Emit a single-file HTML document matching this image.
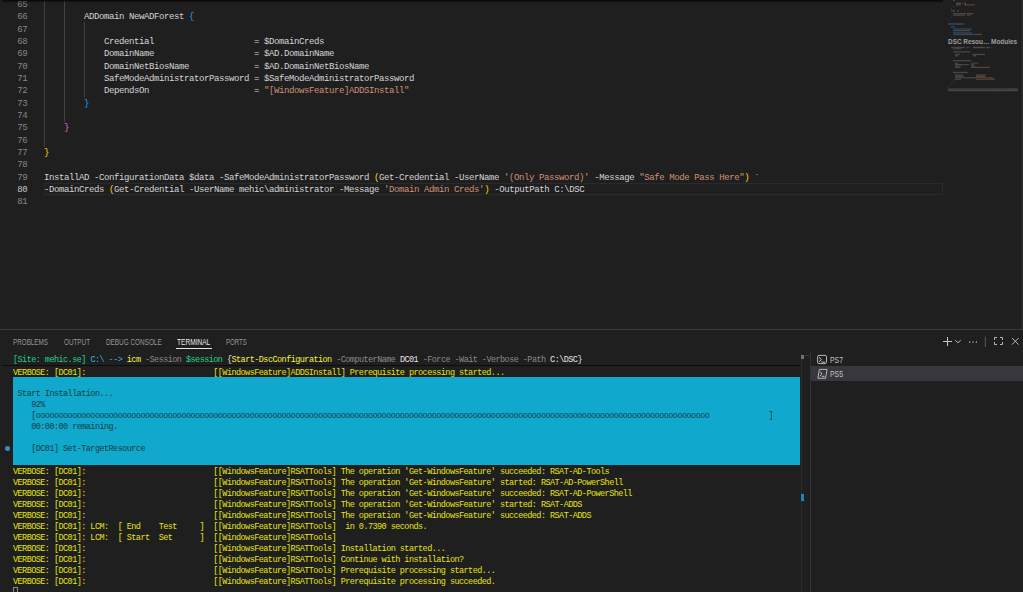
<!DOCTYPE html>
<html><head><meta charset="utf-8">
<style>
html,body{margin:0;padding:0;width:1023px;height:592px;overflow:hidden;background:#1f1f1f;}
body{position:relative;font-family:"Liberation Mono",monospace;}
.ln{position:absolute;left:0;width:27.2px;text-align:right;font-size:9.0px;letter-spacing:-0.400px;line-height:12.33px;white-space:pre;}
.cl{position:absolute;left:44px;font-size:9.0px;letter-spacing:-0.400px;line-height:12.33px;white-space:pre;color:#d4d4d4;}
.tl{position:absolute;left:13px;font-size:8.5px;letter-spacing:-0.550px;line-height:11.0px;white-space:pre;}
.tab{position:absolute;top:336px;font-family:"Liberation Sans",sans-serif;font-size:8.5px;line-height:12px;transform-origin:0 0;white-space:pre;}
</style></head><body>
<div id="editor" style="position:absolute;left:0;top:0;width:1023px;height:329px;overflow:hidden;background:#1f1f1f">
<div class="ln" style="top:-1.00px;color:#858585">65</div>
<div class="ln" style="top:11.33px;color:#858585">66</div>
<div class="cl" style="top:11.33px">        ADDomain NewADForest <span style="color:#179fff">{</span></div>
<div class="ln" style="top:23.66px;color:#858585">67</div>
<div class="ln" style="top:35.99px;color:#858585">68</div>
<div class="cl" style="top:35.99px">            Credential                    = $DomainCreds</div>
<div class="ln" style="top:48.32px;color:#858585">69</div>
<div class="cl" style="top:48.32px">            DomainName                    = $AD.DomainName</div>
<div class="ln" style="top:60.65px;color:#858585">70</div>
<div class="cl" style="top:60.65px">            DomainNetBiosName             = $AD.DomainNetBiosName</div>
<div class="ln" style="top:72.98px;color:#858585">71</div>
<div class="cl" style="top:72.98px">            SafeModeAdministratorPassword = $SafeModeAdministratorPassword</div>
<div class="ln" style="top:85.31px;color:#858585">72</div>
<div class="cl" style="top:85.31px">            DependsOn                     = <span style="color:#ce9178">&quot;[WindowsFeature]ADDSInstall&quot;</span></div>
<div class="ln" style="top:97.64px;color:#858585">73</div>
<div class="cl" style="top:97.64px">        <span style="color:#179fff">}</span></div>
<div class="ln" style="top:109.97px;color:#858585">74</div>
<div class="ln" style="top:122.30px;color:#858585">75</div>
<div class="cl" style="top:122.30px">    <span style="color:#da70d6">}</span></div>
<div class="ln" style="top:134.63px;color:#858585">76</div>
<div class="ln" style="top:146.96px;color:#858585">77</div>
<div class="cl" style="top:146.96px"><span style="color:#ffd700">}</span></div>
<div class="ln" style="top:159.29px;color:#858585">78</div>
<div class="ln" style="top:171.62px;color:#858585">79</div>
<div class="cl" style="top:171.62px">InstallAD -ConfigurationData $data -SafeModeAdministratorPassword <span style="color:#ffd700">(</span>Get-Credential -UserName <span style="color:#ce9178">&#x27;(Only Password)&#x27;</span> -Message <span style="color:#ce9178">&quot;Safe Mode Pass Here&quot;</span><span style="color:#ffd700">)</span> `</div>
<div class="ln" style="top:183.95px;color:#c6c6c6">80</div>
<div class="cl" style="top:183.95px">-DomainCreds <span style="color:#ffd700">(</span>Get-Credential -UserName mehic\administrator -Message <span style="color:#ce9178">&#x27;Domain Admin Creds&#x27;</span><span style="color:#ffd700">)</span> -OutputPath C:\DSC</div>
<div class="ln" style="top:196.28px;color:#858585">81</div>
<div style="position:absolute;left:44px;top:183.15px;width:897px;height:10.33px;border:1px solid #2a2a2a"></div>
<div style="position:absolute;left:44px;top:0.00px;width:1px;height:146.96px;background:#404040"></div>
<div style="position:absolute;left:64px;top:0.00px;width:1px;height:122.30px;background:#404040"></div>
<div style="position:absolute;left:84px;top:21.66px;width:1px;height:75.98px;background:#404040"></div>
<svg style="position:absolute;left:0;top:0" width="1023" height="100"><rect x="953" y="0.0" width="2" height="1.2" fill="#2c4863"/><rect x="956" y="2.5" width="5" height="2.0" fill="#464646"/><rect x="962" y="2.5" width="1" height="2.0" fill="#383838"/><rect x="964" y="2.5" width="2" height="2.0" fill="#574539"/><rect x="956" y="4.3" width="5" height="1.2" fill="#464646"/><rect x="964" y="4.3" width="11" height="1.2" fill="#574539"/><rect x="953" y="6.3" width="1" height="1.2" fill="#383838"/><rect x="951" y="7.8" width="1" height="1.2" fill="#383838"/><rect x="951" y="10.2" width="4" height="1.5" fill="#464646"/><rect x="957" y="10.2" width="2" height="1.5" fill="#2c4863"/><rect x="953" y="13.0" width="13" height="1.4" fill="#464646"/><rect x="967" y="13.0" width="6" height="1.4" fill="#574539"/><rect x="953" y="14.6" width="12" height="1.2" fill="#464646"/><rect x="967" y="14.6" width="3" height="1.2" fill="#574539"/><rect x="951" y="17.2" width="1" height="1.2" fill="#383838"/><rect x="948" y="19.6" width="1" height="1.2" fill="#383838"/><rect x="948" y="23.2" width="9" height="1.6" fill="#2c4863"/><rect x="957" y="23.2" width="6" height="1.6" fill="#464646"/><rect x="964" y="23.2" width="1" height="1.6" fill="#383838"/><rect x="951" y="26.0" width="4" height="1.4" fill="#2c4863"/><rect x="953" y="28.4" width="19" height="1.3" fill="#2c4863"/><rect x="953" y="30.0" width="4" height="1.3" fill="#2c4863"/><rect x="957" y="30.0" width="13" height="1.3" fill="#464646"/><rect x="953" y="32.2" width="19" height="1.3" fill="#2c4863"/><rect x="953" y="33.8" width="4" height="1.3" fill="#2c4863"/><rect x="957" y="33.8" width="25" height="1.3" fill="#464646"/><rect x="951" y="36.6" width="1" height="1.2" fill="#383838"/><rect x="951" y="46.8" width="14" height="1.4" fill="#464646"/><rect x="966" y="46.8" width="3" height="1.4" fill="#383838"/><rect x="973" y="46.8" width="12" height="1.4" fill="#574539"/><rect x="986" y="46.8" width="4" height="1.4" fill="#464646"/><rect x="991" y="46.8" width="1" height="1.4" fill="#383838"/><rect x="953" y="48.2" width="8" height="1.2" fill="#464646"/><rect x="953" y="51.2" width="17" height="1.3" fill="#464646"/><rect x="955" y="53.8" width="5" height="1.3" fill="#464646"/><rect x="972" y="53.8" width="1" height="1.3" fill="#383838"/><rect x="973" y="53.8" width="12" height="1.3" fill="#574539"/><rect x="955" y="55.2" width="3" height="1.2" fill="#464646"/><rect x="973" y="55.2" width="3" height="1.2" fill="#574539"/><rect x="953" y="57.4" width="1" height="1.2" fill="#383838"/><rect x="953" y="60.0" width="18" height="1.3" fill="#464646"/><rect x="955" y="62.6" width="3" height="1.2" fill="#464646"/><rect x="971" y="62.6" width="7" height="1.2" fill="#2c4863"/><rect x="955" y="64.0" width="14" height="1.2" fill="#464646"/><rect x="971" y="64.0" width="3" height="1.2" fill="#2c4863"/><rect x="955" y="65.4" width="6" height="1.2" fill="#464646"/><rect x="971" y="65.4" width="4" height="1.2" fill="#574539"/><rect x="955" y="66.8" width="5" height="1.2" fill="#464646"/><rect x="971" y="66.8" width="19" height="1.2" fill="#574539"/><rect x="953" y="69.4" width="1" height="1.2" fill="#383838"/><rect x="953" y="71.8" width="15" height="1.3" fill="#464646"/><rect x="955" y="74.4" width="8" height="1.2" fill="#464646"/><rect x="976" y="74.4" width="10" height="1.2" fill="#574539"/><rect x="955" y="75.8" width="9" height="1.2" fill="#464646"/><rect x="976" y="75.8" width="9" height="1.2" fill="#574539"/><rect x="955" y="77.2" width="21" height="1.2" fill="#464646"/><rect x="976" y="77.2" width="17" height="1.2" fill="#574539"/><rect x="955" y="78.6" width="6" height="1.2" fill="#464646"/><rect x="976" y="78.6" width="19" height="1.2" fill="#574539"/><rect x="953" y="80.8" width="1" height="1.2" fill="#383838"/><rect x="951" y="83.4" width="1" height="1.2" fill="#383838"/><rect x="948" y="86.0" width="1" height="1.2" fill="#383838"/><rect x="948" y="88.4" width="60" height="1.3" fill="#464646"/><rect x="1008" y="88.4" width="10" height="1.3" fill="#574539"/><rect x="948" y="90.0" width="45" height="1.2" fill="#464646"/><rect x="993" y="90.0" width="10" height="1.2" fill="#574539"/><rect x="1003" y="90.0" width="15" height="1.2" fill="#464646"/></svg>
<div style="position:absolute;left:948.2px;top:37.4px;font-family:'Liberation Sans',sans-serif;font-weight:bold;font-size:7px;line-height:10px;color:#a0a0a0;white-space:pre;transform-origin:0 0;transform:scaleX(0.915)">DSC Resou… Modules</div>
<div style="position:absolute;left:2px;top:0;width:941px;height:3px;background:linear-gradient(rgba(0,0,0,0.85),rgba(0,0,0,0.35) 50%,rgba(0,0,0,0))"></div>
</div>
<div style="position:absolute;left:0;top:329px;width:1023px;height:1px;background:#3c3c3c"></div>
<div class="tab" style="left:13.3px;color:#969696;transform:scaleX(0.7400)">PROBLEMS</div>
<div class="tab" style="left:63.5px;color:#969696;transform:scaleX(0.7444)">OUTPUT</div>
<div class="tab" style="left:105.9px;color:#969696;transform:scaleX(0.7507)">DEBUG CONSOLE</div>
<div class="tab" style="left:177.0px;color:#e7e7e7;transform:scaleX(0.7744)">TERMINAL</div>
<div class="tab" style="left:226.4px;color:#969696;transform:scaleX(0.7163)">PORTS</div>

<div style="position:absolute;left:175.5px;top:348px;width:36.7px;height:1px;background:#e7e7e7"></div>
<div id="term" style="position:absolute;left:0;top:0;width:1023px;height:592px;">
<div class="tl" style="top:367.57px"><span style="color:#e5e510">VERBOSE: [DC01]:                            [[WindowsFeature]ADDSInstall] Prerequisite processing started...</span></div>
<div class="tl" style="top:466.57px"><span style="color:#e5e510">VERBOSE: [DC01]:                            [[WindowsFeature]RSATTools] The operation &#x27;Get-WindowsFeature&#x27; succeeded: RSAT-AD-Tools</span></div>
<div class="tl" style="top:477.57px"><span style="color:#e5e510">VERBOSE: [DC01]:                            [[WindowsFeature]RSATTools] The operation &#x27;Get-WindowsFeature&#x27; started: RSAT-AD-PowerShell</span></div>
<div class="tl" style="top:488.57px"><span style="color:#e5e510">VERBOSE: [DC01]:                            [[WindowsFeature]RSATTools] The operation &#x27;Get-WindowsFeature&#x27; succeeded: RSAT-AD-PowerShell</span></div>
<div class="tl" style="top:499.57px"><span style="color:#e5e510">VERBOSE: [DC01]:                            [[WindowsFeature]RSATTools] The operation &#x27;Get-WindowsFeature&#x27; started: RSAT-ADDS</span></div>
<div class="tl" style="top:510.57px"><span style="color:#e5e510">VERBOSE: [DC01]:                            [[WindowsFeature]RSATTools] The operation &#x27;Get-WindowsFeature&#x27; succeeded: RSAT-ADDS</span></div>
<div class="tl" style="top:521.57px"><span style="color:#e5e510">VERBOSE: [DC01]: LCM:  [ End    Test     ]  [[WindowsFeature]RSATTools]  in 0.7390 seconds.</span></div>
<div class="tl" style="top:532.57px"><span style="color:#e5e510">VERBOSE: [DC01]: LCM:  [ Start  Set      ]  [[WindowsFeature]RSATTools]</span></div>
<div class="tl" style="top:543.57px"><span style="color:#e5e510">VERBOSE: [DC01]:                            [[WindowsFeature]RSATTools] Installation started...</span></div>
<div class="tl" style="top:554.57px"><span style="color:#e5e510">VERBOSE: [DC01]:                            [[WindowsFeature]RSATTools] Continue with installation?</span></div>
<div class="tl" style="top:565.57px"><span style="color:#e5e510">VERBOSE: [DC01]:                            [[WindowsFeature]RSATTools] Prerequisite processing started...</span></div>
<div class="tl" style="top:576.57px"><span style="color:#e5e510">VERBOSE: [DC01]:                            [[WindowsFeature]RSATTools] Prerequisite processing succeeded.</span></div>
<div style="position:absolute;left:13px;top:377.07px;width:787px;height:88.00px;background:#11a8cd"></div>
<div class="tl" style="top:388.97px"><span style="color:#173f3f"> Start Installation...</span></div>
<div class="tl" style="top:399.97px"><span style="color:#173f3f">    92%</span></div>
<div class="tl" style="top:410.97px"><span style="color:#173f3f">    [oooooooooooooooooooooooooooooooooooooooooooooooooooooooooooooooooooooooooooooooooooooooooooooooooooooooooooooooooooooooooooooooooooooooooooooooooooo             ]</span></div>
<div class="tl" style="top:421.97px"><span style="color:#173f3f">    00:00:00 remaining.</span></div>
<div class="tl" style="top:443.97px"><span style="color:#173f3f">    [DC01] Set-TargetResource</span></div>
<div style="position:absolute;left:2px;top:352px;width:798px;height:13px;background:#1f1f1f;border-bottom:1px solid #0c0c0c"></div>
<div class="tl" style="top:354.50px"><span style="color:#23d18b">[Site: mehic.se] </span><span style="color:#29b8db">C:\ --&gt; </span><span style="color:#f5f543">icm </span><span style="color:#8a8a8a">-Session </span><span style="color:#23d18b">$session </span><span style="color:#e5e5e5">{</span><span style="color:#f5f543">Start-DscConfiguration </span><span style="color:#8a8a8a">-ComputerName </span><span style="color:#e5e5e5">DC01 </span><span style="color:#8a8a8a">-Force -Wait -Verbose -Path </span><span style="color:#e5e5e5">C:\DSC}</span></div>
</div>
<div style="position:absolute;left:811px;top:366.2px;width:212px;height:14.5px;background:#37373d"></div>
<svg style="position:absolute;left:0;top:0" width="1023" height="592" viewBox="0 0 1023 592">
<g stroke="#c5c5c5" stroke-width="1" fill="none">
<path d="M943 341.5H952M947.5 337V346"/>
<path d="M955.2 340.2L958 342.8L960.8 340.2" stroke-width="0.9"/>
<path d="M985.3 336.6V347" stroke="#5a5a5a"/>
<path d="M994.5 340V337.5H997M1000 337.5H1002.5V340M1002.5 342V344.5H1000M997 344.5H994.5V342" stroke-width="0.9"/>
<path d="M1012 338L1018.6 344.6M1018.6 338L1012 344.6" stroke-width="0.9"/>
</g>
<g fill="#c5c5c5"><rect x="969" y="341.5" width="1.2" height="1.2"/><rect x="972.4" y="341.5" width="1.2" height="1.2"/><rect x="975.8" y="341.5" width="1.2" height="1.2"/></g>
<g stroke="#c5c5c5" stroke-width="0.9" fill="none">
<rect x="817.6" y="355.4" width="8.9" height="8.2" rx="1.4"/>
<path d="M818.9 357.4L821.5 359.6L818.9 361.8M821.3 362.1H825.2" stroke-width="1"/>
<path d="M819.4 369.4H827.1L825.6 378.3H817.9Z" stroke-linejoin="round"/>
<path d="M820.6 371.8L821.9 374L819.8 376M821.8 376.3H824.6" stroke-width="1"/>
</g>
</svg>
<div style="position:absolute;left:829.7px;top:354px;font-family:'Liberation Sans',sans-serif;font-size:8.4px;line-height:12px;color:#c4c4c4;transform:scaleX(0.82);transform-origin:0 0">PS7</div>
<div style="position:absolute;left:829.7px;top:368px;font-family:'Liberation Sans',sans-serif;font-size:8.4px;line-height:12px;color:#c4c4c4;transform:scaleX(0.82);transform-origin:0 0">PS5</div>
<div style="position:absolute;left:13px;top:586.7px;width:3px;height:8px;border:1px solid #8a8a8a"></div>
<div style="position:absolute;left:5px;top:446px;width:4.5px;height:4.5px;border-radius:50%;background:#3c8ac4"></div>
<div style="position:absolute;left:1021px;top:0;width:2px;height:329px;background:#282828"></div>
<div style="position:absolute;left:801px;top:353px;width:1px;height:239px;background:#2b2b2b"></div>
<div style="position:absolute;left:801px;top:355px;width:3px;height:4px;background:#6e6e6e"></div>
<div style="position:absolute;left:804px;top:355px;width:6px;height:1px;background:#333"></div>
<div style="position:absolute;left:801px;top:494px;width:3px;height:7px;background:#1a85c2"></div>
<div style="position:absolute;left:810px;top:352px;width:1px;height:240px;background:#333"></div>

</body></html>
